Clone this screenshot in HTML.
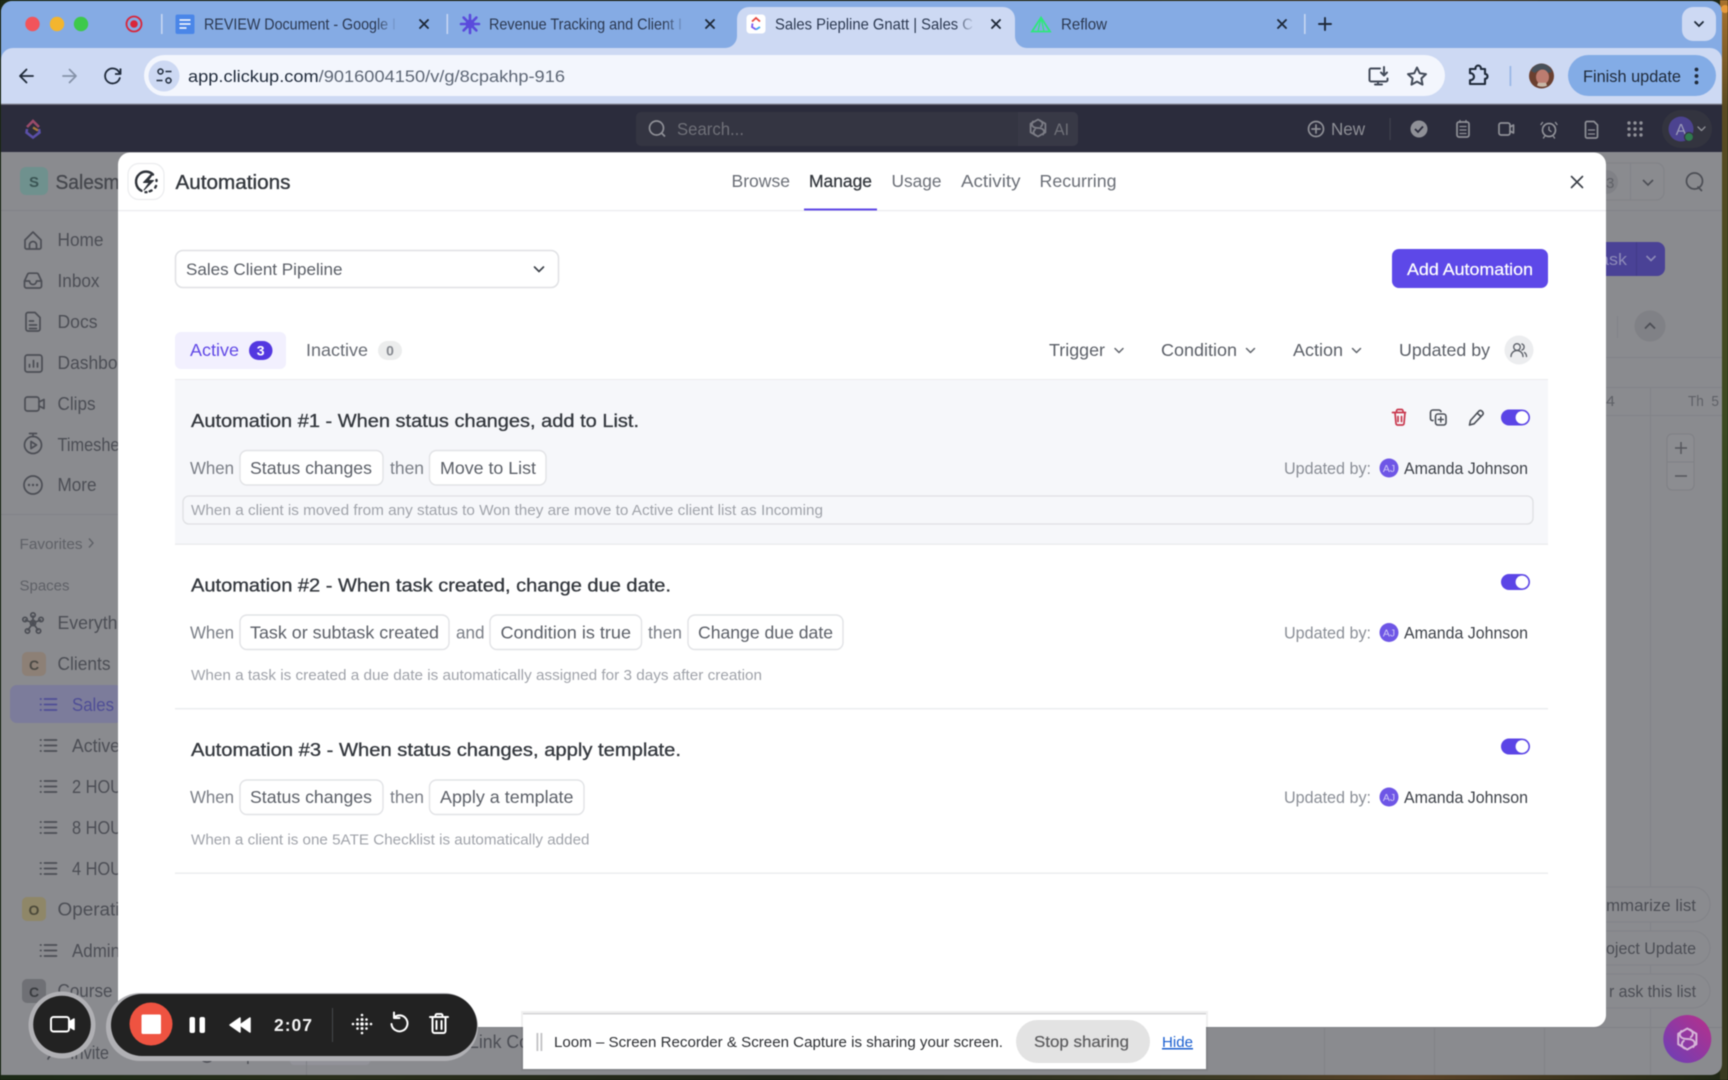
<!DOCTYPE html>
<html lang="en">
<head>
<meta charset="utf-8">
<title>Automations</title>
<style>
html,body{margin:0;padding:0;width:1728px;height:1080px;overflow:hidden;background:#14180f}
svg{position:absolute;left:0;top:0;display:block;filter:blur(.4px)}
text{font-family:"Liberation Sans",sans-serif;white-space:pre}
.tab{font-size:16px;fill:#2b3850}
.side{font-size:18px;fill:#4c4e55}
.t{font-size:18.5px;fill:#33373d;stroke:#33373d;stroke-width:.3}
.nav{font-size:17.5px;fill:#6b6f77}
.f{font-size:17.5px;fill:#5c6068}
.w{font-size:17.5px;fill:#7a7e86}
.c{font-size:17.5px;fill:#5c6068}
.d{font-size:14.5px;fill:#a0a3aa}
.u{font-size:16.5px;fill:#8a8e96}
.n{font-size:16.5px;fill:#3f434a}
.chip{fill:#fff;stroke:#e2e3e6;stroke-width:1.4}
.i{fill:none;stroke:#4c4e55;stroke-width:1.7;stroke-linecap:round;stroke-linejoin:round}
.k{fill:none;stroke:#3a3f47;stroke-width:1.9;stroke-linecap:round;stroke-linejoin:round}
.g{fill:none;stroke:#8f9097;stroke-width:1.7;stroke-linecap:round;stroke-linejoin:round}
.m{fill:none;stroke:#60646c;stroke-width:1.5;stroke-linecap:round;stroke-linejoin:round}
</style>
</head>
<body>
<svg width="1728" height="1080" viewBox="0 0 1728 1080" xmlns="http://www.w3.org/2000/svg">
<defs>
<linearGradient id="fa" x1="0" x2="1" y1="0" y2="0"><stop offset="0" stop-color="#85abe4" stop-opacity="0"/><stop offset="1" stop-color="#85abe4"/></linearGradient>
<linearGradient id="fb" x1="0" x2="1" y1="0" y2="0"><stop offset="0" stop-color="#cdd9f3" stop-opacity="0"/><stop offset="1" stop-color="#cdd9f3"/></linearGradient>
<linearGradient id="pk" x1="1" x2="0" y1="0" y2="1"><stop offset="0" stop-color="#b8308a"/><stop offset="1" stop-color="#6a40b8"/></linearGradient>
<linearGradient id="bg" x1="0" x2="1" y1="0" y2="0"><stop offset="0" stop-color="#1c2a17"/><stop offset=".2" stop-color="#2b2f1c"/><stop offset=".45" stop-color="#20261a"/><stop offset=".7" stop-color="#3c3a24"/><stop offset=".82" stop-color="#5b4226"/><stop offset="1" stop-color="#1f2816"/></linearGradient>
<linearGradient id="bgr" x1="0" x2="0" y1="0" y2="1"><stop offset="0" stop-color="#a8722e"/><stop offset=".1" stop-color="#5a4a22"/><stop offset=".4" stop-color="#3b4a22"/><stop offset=".7" stop-color="#262f1b"/><stop offset="1" stop-color="#3a3a20"/></linearGradient>
</defs>

<!-- desktop wallpaper -->
<rect x="0" y="0" width="1728" height="1080" fill="url(#bg)"/>
<rect x="1720" y="0" width="8" height="1080" fill="url(#bgr)"/>

<!-- browser window -->
<rect x="1" y="1" width="1721" height="1074" rx="11" fill="#8a8b8f"/>
<path d="M1 104V12A11 11 0 0 1 12 1H1711A11 11 0 0 1 1722 12V104Z" fill="#85abe4"/>
<path d="M1 104V60A12 12 0 0 1 13 48H1710A12 12 0 0 1 1722 60V104Z" fill="#cdd9f3"/>

<!-- tab strip -->
<circle cx="32.5" cy="24" r="7.2" fill="#f2545b"/>
<circle cx="57" cy="24" r="7.2" fill="#f3b52f"/>
<circle cx="81" cy="24" r="7.2" fill="#3dc94a"/>
<circle cx="134" cy="24" r="7.5" fill="none" stroke="#d9263a" stroke-width="1.8"/>
<circle cx="134" cy="24" r="3.8" fill="#d9263a"/>
<rect x="161" y="14" width="1.6" height="20" fill="#c6d6f2"/>
<rect x="175.500" y="14.500" width="19" height="19.500" rx="2" fill="#4a86e8"/>
<path d="M179.500 20h11M179.500 24h11M179.500 28h7" stroke="#fff" stroke-width="1.6" fill="none"/>
<text class="tab" x="204" y="29.500" textLength="192" lengthAdjust="spacingAndGlyphs">REVIEW Document - Google I</text>
<rect x="376" y="12" width="22" height="24" fill="url(#fa)"/>
<path d="M420 20l8 8M428 20l-8 8" stroke="#1f2a3a" stroke-width="1.900" stroke-linecap="round"/>
<rect x="446.500" y="14" width="1.600" height="20" fill="#c6d6f2"/>
<g stroke="#5a4bdc" stroke-width="2.600" stroke-linecap="round"><path d="M470 15v18M461 24h18M463.600 17.600l12.800 12.800M476.400 17.600l-12.800 12.800"/></g>
<circle cx="470" cy="24" r="4.500" fill="#5a4bdc"/>
<text class="tab" x="489" y="29.500" textLength="193" lengthAdjust="spacingAndGlyphs">Revenue Tracking and Client I</text>
<rect x="664" y="12" width="22" height="24" fill="url(#fa)"/>
<path d="M706 20l8 8M714 20l-8 8" stroke="#1f2a3a" stroke-width="1.900" stroke-linecap="round"/>

<!-- active tab -->
<path d="M725 48A12 12 0 0 0 737 36V19A12 12 0 0 1 749 7H1003A12 12 0 0 1 1015 19V36A12 12 0 0 0 1027 48Z" fill="#cdd9f3"/>
<rect x="746.500" y="14.500" width="19" height="19" rx="3.500" fill="#fff"/>
<path d="M752 21.500l4-3.500 4 3.500" fill="none" stroke="#e8473f" stroke-width="1.800"/>
<path d="M752.500 23.500l-.5 3.500 4 2.500" fill="none" stroke="#7b5bf0" stroke-width="1.800"/>
<path d="M756 29.500l4-2.500" fill="none" stroke="#3ba6f0" stroke-width="1.800"/>
<text class="tab" x="775" y="29.500" textLength="198" lengthAdjust="spacingAndGlyphs">Sales Piepline Gnatt | Sales C</text>
<rect x="955" y="12" width="20" height="24" fill="url(#fb)"/>
<path d="M992 20l8 8M1000 20l-8 8" stroke="#1f2a3a" stroke-width="1.900" stroke-linecap="round"/>

<path d="M1032 31.500l9-14 9 14z" fill="none" stroke="#2ee87b" stroke-width="1.800"/><path d="M1041 17.500l-3 14M1041 17.500l3 14" stroke="#2ee87b" stroke-width="1.300"/>
<text class="tab" x="1061" y="29.500" textLength="46" lengthAdjust="spacingAndGlyphs">Reflow</text>
<path d="M1278 20l8 8M1286 20l-8 8" stroke="#1f2a3a" stroke-width="1.900" stroke-linecap="round"/>
<rect x="1304" y="14" width="1.600" height="20" fill="#c6d6f2"/>
<path d="M1325 18v12M1319 24h12" stroke="#1f2a3a" stroke-width="1.900" stroke-linecap="round"/>
<rect x="1682" y="7" width="34" height="34" rx="11" fill="#cdd9f3"/>
<path d="M1695 22l4 4 4-4" fill="none" stroke="#1f2a3a" stroke-width="1.800" stroke-linecap="round"/>
<circle cx="1725" cy="9" r="4" fill="#e79a3c"/>

<!-- toolbar -->
<path d="M26.500 69.500l-6.500 6.500 6.500 6.500M20 76h13" fill="none" stroke="#1f2a3a" stroke-width="1.800" stroke-linecap="round" stroke-linejoin="round"/>
<path d="M69.500 69.500l6.500 6.500-6.500 6.500M63 76h13" fill="none" stroke="#8592a8" stroke-width="1.700" stroke-linecap="round" stroke-linejoin="round"/>
<path d="M119.500 73a7.500 7.500 0 1 0 .3 5" fill="none" stroke="#1f2a3a" stroke-width="1.800" stroke-linecap="round"/><path d="M120.500 68.500v5.500h-5.500" fill="none" stroke="#1f2a3a" stroke-width="1.800" stroke-linejoin="round"/>
<rect x="144" y="55" width="1301" height="41" rx="20.500" fill="#f3f6fd"/>
<circle cx="164" cy="76" r="15.500" fill="#cdd9f3"/>
<circle cx="160.500" cy="71.500" r="2.500" fill="none" stroke="#1f2a3a" stroke-width="1.500"/>
<path d="M165.500 71.500h6M156.500 80.500h6" stroke="#1f2a3a" stroke-width="1.500"/>
<circle cx="168.500" cy="80.500" r="2.500" fill="none" stroke="#1f2a3a" stroke-width="1.500"/>
<text x="188" y="82" font-size="17" textLength="377" lengthAdjust="spacingAndGlyphs" fill="#5d6675"><tspan fill="#1f2a3a">app.clickup.com</tspan>/9016004150/v/g/8cpakhp-916</text>
<path d="M1380 68.500h-9a1.500 1.500 0 0 0-1.500 1.500v10a1.500 1.500 0 0 0 1.500 1.500h15a1.500 1.500 0 0 0 1.500-1.500v-1.500M1375 84.500h7M1378 81.500v3M1384 67v8M1381 72.500l3 3 3-3" fill="none" stroke="#444c5a" stroke-width="2" stroke-linecap="round" stroke-linejoin="round"/>
<path d="M1417 67.500l2.700 5.700 6.300.9-4.600 4.300 1.100 6.200-5.500-3-5.500 3 1.100-6.200-4.600-4.300 6.300-.9z" fill="none" stroke="#444c5a" stroke-width="2" stroke-linejoin="round"/>
<path d="M1470 69h5.500v-.7a2.700 2.700 0 0 1 5.400 0v.7h4.100v5h.7a2.500 2.500 0 0 1 0 4.800h-.7V84h-15v-3.800h.5a3.500 3.500 0 0 0 0-7h-.5z" fill="none" stroke="#1f2a3a" stroke-width="2.100" stroke-linejoin="round"/>
<rect x="1509.500" y="66" width="1.800" height="20" fill="#9ab8e6"/>
<circle cx="1541.500" cy="76" r="12.500" fill="#6b4030"/>
<path d="M1531 71a11 11 0 0 1 21 1l-4 1c-4-4-10-4-13 0z" fill="#46505a"/>
<ellipse cx="1542.500" cy="77" rx="6.500" ry="7.500" fill="#bc7c70"/>
<path d="M1537 85.500a12 12 0 0 0 10 .3l-1-3h-8z" fill="#c9b8a8"/>
<rect x="1568" y="55" width="148" height="41" rx="20.500" fill="#83ace6"/>
<text x="1583" y="82" font-size="16.500" textLength="98" lengthAdjust="spacingAndGlyphs" fill="#1f2a3a">Finish update</text>
<circle cx="1696.500" cy="69.500" r="1.900" fill="#1f2a3a"/><circle cx="1696.500" cy="76" r="1.900" fill="#1f2a3a"/><circle cx="1696.500" cy="82.500" r="1.900" fill="#1f2a3a"/>

<!-- clickup topbar -->
<rect x="1" y="104" width="1721" height="48" fill="#2b2c3c"/>
<rect x="1" y="103.500" width="1721" height="1.200" fill="#8d8f9e"/>
<path d="M27 127l6-6 6 6" fill="none" stroke="#9a4b6a" stroke-width="2.600"/>
<path d="M27 129l-.5 3.500 6.500 5 6.500-5-.5-3.500" fill="none" stroke="#5a4fa8" stroke-width="2.600"/>
<path d="M33 127.500l5 3" fill="none" stroke="#a8783a" stroke-width="2.400"/>
<rect x="636" y="112" width="442" height="34" rx="5" fill="#343542"/>
<path d="M1018 112h55a5 5 0 0 1 5 5v24a5 5 0 0 1-5 5h-55z" fill="#383946"/>
<circle cx="656.500" cy="128" r="7" fill="none" stroke="#8f9097" stroke-width="1.700"/><path d="M661.500 133l3.500 3.500" stroke="#8f9097" stroke-width="1.700"/>
<text x="677" y="135" font-size="17.500" textLength="67" lengthAdjust="spacingAndGlyphs" fill="#6f7078">Search...</text>
<g transform="translate(1038 128)" fill="none" stroke="#7b7c85" stroke-width="1.800" stroke-linejoin="round" stroke-linecap="round"><path d="M0-8.500L7.400-4.300V4.300L0 8.500-7.400 4.300V-4.300Z"/><path d="M-5-6.500C-8-2-4 0 0 0S8 2 5 6.500"/><path d="M2-7.500C5-6 5-3 3-1.500M-2 7.500C-5 6-5 3-3 1.500"/></g>
<text x="1054" y="135" font-size="17" textLength="15" lengthAdjust="spacingAndGlyphs" fill="#6f7078">AI</text>
<circle cx="1316" cy="129" r="7.500" class="g"/><path d="M1316 125v8M1312 129h8" class="g"/>
<text x="1331" y="135" font-size="17.500" textLength="34" lengthAdjust="spacingAndGlyphs" fill="#8f9097">New</text>
<rect x="1389.500" y="118" width="1.200" height="22" fill="#3f404c"/>
<circle cx="1419" cy="129" r="8.500" fill="#8f9097"/><path d="M1415 129l3 3 5-5.500" fill="none" stroke="#2b2c3c" stroke-width="1.800"/>
<rect x="1457" y="122" width="12" height="15" rx="2" class="g"/><path d="M1460 126.500h6M1460 130h6M1460 133.500h6M1460 120.500v2M1466 120.500v2" class="g" style="stroke-width:1.300"/>
<rect x="1499" y="123" width="11" height="12" rx="2" class="g"/><path d="M1510 127l3.500-2v8l-3.500-2" class="g"/>
<circle cx="1549" cy="130" r="6.500" class="g"/><path d="M1549 127v3l2 1.500M1542.500 122.500l-1.500 2M1555.500 122.500l1.500 2M1544.500 136.500l-1 1.500M1553.500 136.500l1 1.500" class="g" style="stroke-width:1.400"/>
<path d="M1587 121.500h7l3.500 3.500v11.500a1.500 1.500 0 0 1-1.500 1.500h-9a1.500 1.500 0 0 1-1.500-1.500v-13.500a1.500 1.500 0 0 1 1.500-1.500z" class="g"/><path d="M1588.500 130h6M1588.500 134h6" class="g" style="stroke-width:1.300"/>
<g fill="#8f9097"><circle cx="1629" cy="123" r="1.700"/><circle cx="1635" cy="123" r="1.700"/><circle cx="1641" cy="123" r="1.700"/><circle cx="1629" cy="129" r="1.700"/><circle cx="1635" cy="129" r="1.700"/><circle cx="1641" cy="129" r="1.700"/><circle cx="1629" cy="135" r="1.700"/><circle cx="1635" cy="135" r="1.700"/><circle cx="1641" cy="135" r="1.700"/></g>
<rect x="1662" y="110" width="50" height="38" rx="19" fill="#33343f"/>
<circle cx="1681" cy="129" r="12.500" fill="#4c4390"/>
<text x="1681" y="135" font-size="16" text-anchor="middle" fill="#9a9ab8">A</text>
<circle cx="1689" cy="137" r="4.500" fill="#2f7a4e" stroke="#33343f" stroke-width="1.200"/>
<path d="M1698 127l3.500 3.500 3.500-3.500" class="g" style="stroke-width:1.300"/>

<!-- dim page: sidebar -->
<rect x="1" y="152" width="117" height="923" fill="#8a8b8f"/>
<rect x="20" y="167" width="28" height="28" rx="6" fill="#6f918e"/>
<text x="34" y="187" font-size="15" text-anchor="middle" fill="#3b5554" font-weight="700">S</text>
<text x="55.500" y="189" font-size="20" textLength="64" lengthAdjust="spacingAndGlyphs" fill="#45474d" stroke="#45474d" stroke-width=".3">Salesm</text>
<rect x="1" y="210" width="117" height="1" fill="#828388"/>

<path class="i" d="M25 240l8-8 8 8v7.500a1.500 1.500 0 0 1-1.500 1.500h-13a1.500 1.500 0 0 1-1.500-1.500zM29.500 249v-4a3.500 3.500 0 0 1 7 0v4"/>
<text class="side" x="57.500" y="246" textLength="46" lengthAdjust="spacingAndGlyphs">Home</text>
<path class="i" d="M24.500 281l3-6.500a2 2 0 0 1 2-1.300h7a2 2 0 0 1 2 1.300l3 6.500v5a2 2 0 0 1-2 2h-13a2 2 0 0 1-2-2zM24.500 281h5a3.500 3.500 0 0 0 7 0h5"/>
<text class="side" x="57.500" y="287" textLength="42" lengthAdjust="spacingAndGlyphs">Inbox</text>
<path class="i" d="M28 312.500h7l5 5v11.500a2 2 0 0 1-2 2H28a2 2 0 0 1-2-2v-14.500a2 2 0 0 1 2-2zM29.500 321h4M29.500 325h7M29.500 328.500h7"/>
<text class="side" x="57.500" y="328" textLength="40" lengthAdjust="spacingAndGlyphs">Docs</text>
<rect class="i" x="25" y="355" width="17" height="17" rx="2.500"/><path class="i" d="M29.500 367v-2.500M33.500 367v-6.500M37.500 367v-4"/>
<text class="side" x="57.500" y="369" textLength="60" lengthAdjust="spacingAndGlyphs">Dashbo</text>
<rect class="i" x="25" y="397" width="14" height="14" rx="2.500"/><path class="i" d="M39 402l5-2.500v9l-5-2.500"/>
<text class="side" x="57.500" y="410" textLength="38" lengthAdjust="spacingAndGlyphs">Clips</text>
<circle class="i" cx="33" cy="445" r="8.500"/><path class="i" d="M29.500 433.500h7M33 433.500v3M31 441.500l5.500 3.500-5.500 3.500z"/>
<text class="side" x="57.500" y="451" textLength="62" lengthAdjust="spacingAndGlyphs">Timeshe</text>
<circle class="i" cx="33" cy="485" r="9"/><circle cx="29" cy="485" r="1.200" fill="#4c4e55"/><circle cx="33" cy="485" r="1.200" fill="#4c4e55"/><circle cx="37" cy="485" r="1.200" fill="#4c4e55"/>
<text class="side" x="57.500" y="491" textLength="39" lengthAdjust="spacingAndGlyphs">More</text>
<rect x="1" y="514" width="117" height="1" fill="#828388"/>
<text x="19.500" y="549" font-size="15" textLength="63" lengthAdjust="spacingAndGlyphs" fill="#5f6167">Favorites</text>
<path d="M89 538.500l4 4.500-4 4.500" fill="none" stroke="#5f6167" stroke-width="1.400"/>
<text x="19.500" y="590.500" font-size="15" textLength="50" lengthAdjust="spacingAndGlyphs" fill="#5f6167">Spaces</text>

<path class="i" d="M33 623v-7M33 623l-7.500-3M33 623l7.500-3M33 623l-5 7M33 623l5 7"/>
<circle cx="33" cy="623" r="2.600" class="i"/><circle cx="33" cy="615" r="2.200" class="i"/><circle cx="25" cy="619.500" r="2.200" class="i"/><circle cx="41" cy="619.500" r="2.200" class="i"/><circle cx="27.500" cy="631" r="2.200" class="i"/><circle cx="38.500" cy="631" r="2.200" class="i"/>
<text class="side" x="57.500" y="629" textLength="60" lengthAdjust="spacingAndGlyphs">Everyth</text>

<rect x="22" y="652" width="24" height="24" rx="5" fill="#8d8076"/>
<text x="34" y="670" font-size="14" text-anchor="middle" font-weight="700" fill="#4c4a45">C</text>
<text class="side" x="57.500" y="670" textLength="53" lengthAdjust="spacingAndGlyphs">Clients</text>

<rect x="10" y="685" width="112" height="38" rx="7" fill="#7c7c9b"/>
<g class="i" style="stroke:#4f4e96"><path d="M44.500 699h12M44.500 704.500h12M44.500 710h12M40.500 699h.5M40.500 704.500h.5M40.500 710h.5"/></g>
<text class="side" x="72" y="711" textLength="42" lengthAdjust="spacingAndGlyphs" style="fill:#4f4e96">Sales</text>

<path class="i" d="M44.500 740h12M44.500 745.500h12M44.500 751h12M40.500 740h.5M40.500 745.500h.5M40.500 751h.5"/>
<text class="side" x="72" y="752" textLength="48" lengthAdjust="spacingAndGlyphs">Active</text>
<path class="i" d="M44.500 781h12M44.500 786.500h12M44.500 792h12M40.500 781h.5M40.500 786.500h.5M40.500 792h.5"/>
<text class="side" x="72" y="793" textLength="50" lengthAdjust="spacingAndGlyphs">2 HOU</text>
<path class="i" d="M44.500 822h12M44.500 827.500h12M44.500 833h12M40.500 822h.5M40.500 827.500h.5M40.500 833h.5"/>
<text class="side" x="72" y="834" textLength="50" lengthAdjust="spacingAndGlyphs">8 HOU</text>
<path class="i" d="M44.500 863h12M44.500 868.500h12M44.500 874h12M40.500 863h.5M40.500 868.500h.5M40.500 874h.5"/>
<text class="side" x="72" y="875" textLength="50" lengthAdjust="spacingAndGlyphs">4 HOU</text>

<rect x="22" y="897" width="24" height="24" rx="5" fill="#8f8768"/>
<text x="34" y="915" font-size="14" text-anchor="middle" font-weight="700" fill="#4c4a3a">O</text>
<text class="side" x="57.500" y="915.500" textLength="62" lengthAdjust="spacingAndGlyphs">Operati</text>
<path class="i" d="M44.500 945h12M44.500 950.500h12M44.500 956h12M40.500 945h.5M40.500 950.500h.5M40.500 956h.5"/>
<text class="side" x="72" y="957" textLength="48" lengthAdjust="spacingAndGlyphs">Admin</text>
<rect x="22" y="979" width="24" height="24" rx="5" fill="#6f7075"/>
<text x="34" y="997" font-size="14" text-anchor="middle" font-weight="700" fill="#3a3c40">C</text>
<text class="side" x="57.500" y="997" textLength="55" lengthAdjust="spacingAndGlyphs">Course</text>
<path class="i" d="M48 1059a6 6 0 0 1 9-3M52 1050a3.500 3.500 0 1 1 0 .1"/>
<text class="side" x="70" y="1059" textLength="39" lengthAdjust="spacingAndGlyphs">Invite</text>
<circle class="i" cx="207" cy="1055" r="7"/>
<text class="side" x="222" y="1060" textLength="33" lengthAdjust="spacingAndGlyphs">Help</text>
<rect x="290" y="1057" width="80" height="8" rx="4" fill="#929299"/>
<rect x="306" y="1027" width="1" height="48" fill="#808186"/>
<rect x="118" y="1027" width="1604" height="1" fill="#808186"/>
<text class="side" x="469" y="1048" textLength="60" lengthAdjust="spacingAndGlyphs">Link Co</text>
<g fill="#818287"><rect x="1324" y="1027" width="1" height="48"/><rect x="1434" y="1027" width="1" height="48"/><rect x="1544" y="1027" width="1" height="48"/><rect x="1650" y="1027" width="1" height="48"/></g>

<!-- dim page: right side -->
<rect x="1606" y="210" width="116" height="1" fill="#828388"/>
<path d="M1590 163h66a8 8 0 0 1 8 8v21a8 8 0 0 1-8 8h-66z" fill="none" stroke="#828388" stroke-width="1.200"/>
<rect x="1630" y="163" width="1" height="37" fill="#828388"/>
<circle cx="1606" cy="182" r="12" fill="#808186"/>
<text x="1606" y="188" font-size="15" fill="#5f6167">3</text>
<path d="M1643 180l5 5 5-5" fill="none" stroke="#4c4e55" stroke-width="1.600"/>
<circle cx="1694.500" cy="181" r="8" class="i"/><path class="i" d="M1698 187l3.500 3.500"/>
<path d="M1590 242h67a8 8 0 0 1 8 8v18a8 8 0 0 1-8 8h-67z" fill="#4a4296"/>
<rect x="1636" y="242" width="1" height="34" fill="#423b88"/>
<text x="1590" y="265" font-size="17" fill="#8d8ab8" textLength="37" lengthAdjust="spacingAndGlyphs">Task</text>
<path d="M1646.500 256l4.500 4.500 4.500-4.500" fill="none" stroke="#8d8ab8" stroke-width="1.600"/>
<rect x="1617" y="316" width="1" height="22" fill="#828388"/>
<circle cx="1650" cy="326" r="15.500" fill="#808186"/>
<path d="M1645 328.500l5-5 5 5" fill="none" stroke="#4c4e55" stroke-width="1.700"/>
<rect x="1606" y="357" width="116" height="1" fill="#828388"/>
<rect x="1606" y="387" width="116" height="1" fill="#828388"/>
<rect x="1606" y="415" width="116" height="1" fill="#828388"/>
<rect x="1650" y="387" width="1" height="640" fill="#828388"/>
<text x="1606" y="406" font-size="14.500" fill="#5f6167" textLength="9" lengthAdjust="spacingAndGlyphs">4</text>
<text x="1688" y="406" font-size="14.500" fill="#5f6167" textLength="31" lengthAdjust="spacingAndGlyphs">Th  5</text>
<rect x="1667" y="434" width="27" height="56" rx="5" fill="#8c8d91" stroke="#7f8085"/>
<path d="M1667 462h27" stroke="#7f8085"/>
<path d="M1675 448h12M1681 442v12M1675 476h12" stroke="#55575d" stroke-width="1.500" fill="none"/>
<rect x="1560" y="887" width="150" height="35" rx="17" fill="#8a8b8f" stroke="#828388"/>
<rect x="1560" y="931" width="150" height="34" rx="17" fill="#8a8b8f" stroke="#828388"/>
<rect x="1560" y="974" width="150" height="34" rx="17" fill="#8a8b8f" stroke="#828388"/>
<text class="side" x="1606" y="911" style="font-size:16.500px" textLength="90" lengthAdjust="spacingAndGlyphs">mmarize list</text>
<text class="side" x="1606" y="954" style="font-size:16.500px" textLength="90" lengthAdjust="spacingAndGlyphs">oject Update</text>
<text class="side" x="1609" y="997" style="font-size:16.500px" textLength="87" lengthAdjust="spacingAndGlyphs">r ask this list</text>
<circle cx="1687.300" cy="1039" r="24" fill="url(#pk)"/>
<g transform="translate(1687.300 1039)" fill="none" stroke="#d6b4d8" stroke-width="2" stroke-linejoin="round" stroke-linecap="round"><path d="M0-10.500L9.100-5.200V5.200L0 10.500-9.100 5.200V-5.200Z"/><path d="M-6-8C-10-2.500-5 0 0 0S10 2.500 6 8"/><path d="M2.500-9.500C6.500-7.500 6-3.500 3.500-1.800M-2.500 9.500C-6.500 7.500-6 3.500-3.500 1.800"/></g>

<!-- modal -->
<rect x="118" y="152.500" width="1488" height="874.500" rx="12" fill="#fff"/>
<rect x="118" y="210" width="1488" height="1.200" fill="#ebecee"/>
<rect x="128" y="163.500" width="36" height="36" rx="11" fill="#fff" stroke="#ebecee" stroke-width="1.200"/>
<path d="M153 174.500a10 10 0 0 0-13.500-.5 10.300 10.300 0 0 0 2 16.800" fill="none" stroke="#2f333a" stroke-width="2.400" stroke-linecap="round"/>
<path d="M156.500 180v1M156 186l-.8 1.600M151.500 190.500l-1.800.8M146.500 192.200h-1" fill="none" stroke="#2f333a" stroke-width="2.400" stroke-linecap="round"/>
<path d="M151 174.500l-7.500 8h5.800l-5.300 7.500 9.500-9.500h-5.300l4.300-6z" fill="#2f333a" stroke="#2f333a" stroke-width="1" stroke-linejoin="round"/>
<text x="175.500" y="189" font-size="20" textLength="115" lengthAdjust="spacingAndGlyphs" fill="#33373d" stroke="#33373d" stroke-width=".35">Automations</text>

<text class="nav" x="731.500" y="187" textLength="58.500" lengthAdjust="spacingAndGlyphs">Browse</text>
<text class="nav" x="809" y="187" textLength="63" lengthAdjust="spacingAndGlyphs" style="fill:#33373d;stroke:#33373d;stroke-width:.25">Manage</text>
<text class="nav" x="891.500" y="187" textLength="50" lengthAdjust="spacingAndGlyphs">Usage</text>
<text class="nav" x="961" y="187" textLength="59.500" lengthAdjust="spacingAndGlyphs">Activity</text>
<text class="nav" x="1039.500" y="187" textLength="77" lengthAdjust="spacingAndGlyphs">Recurring</text>
<rect x="804" y="208.500" width="73" height="2" fill="#5f48e6"/>
<path d="M1571.500 176.500l11 11M1582.500 176.500l-11 11" stroke="#3a3f47" stroke-width="1.600" stroke-linecap="round"/>

<rect x="175.500" y="250.500" width="383" height="37" rx="7.500" fill="#fff" stroke="#e0e1e4" stroke-width="1.500"/>
<text x="186" y="275" font-size="17" textLength="156.500" lengthAdjust="spacingAndGlyphs" fill="#5c6068">Sales Client Pipeline</text>
<path d="M534.500 267l4.500 4.500 4.500-4.500" fill="none" stroke="#3a3f47" stroke-width="1.600" stroke-linecap="round"/>
<rect x="1392" y="249" width="156" height="39" rx="7" fill="#5d48e8"/>
<text x="1407" y="275" font-size="17" textLength="126" lengthAdjust="spacingAndGlyphs" fill="#fff" stroke="#fff" stroke-width=".2">Add Automation</text>

<rect x="175" y="332" width="111" height="37" rx="6" fill="#f2f0fe"/>
<text x="190" y="356" font-size="17.500" textLength="49" lengthAdjust="spacingAndGlyphs" fill="#6048e6">Active</text>
<rect x="249" y="341" width="23.500" height="19" rx="9.500" fill="#5338e0"/>
<text x="260.700" y="355.500" font-size="14" text-anchor="middle" fill="#fff" font-weight="700">3</text>
<text x="306" y="356" font-size="17.500" textLength="62" lengthAdjust="spacingAndGlyphs" fill="#686c74">Inactive</text>
<rect x="378" y="341" width="24" height="19" rx="9.500" fill="#eceded"/>
<text x="390" y="355.500" font-size="14" text-anchor="middle" fill="#85888f" font-weight="700">0</text>

<text class="f" x="1049" y="356" textLength="56" lengthAdjust="spacingAndGlyphs">Trigger</text>
<path class="m" d="M1115 348.500l4 4 4-4"/>
<text class="f" x="1161" y="356" textLength="76" lengthAdjust="spacingAndGlyphs">Condition</text>
<path class="m" d="M1246.500 348.500l4 4 4-4"/>
<text class="f" x="1293" y="356" textLength="50" lengthAdjust="spacingAndGlyphs">Action</text>
<path class="m" d="M1352.500 348.500l4 4 4-4"/>
<text class="f" x="1399" y="356" textLength="91" lengthAdjust="spacingAndGlyphs">Updated by</text>
<circle cx="1519" cy="350" r="14.500" fill="#ecedef"/>
<circle cx="1517" cy="347" r="3.300" class="m" style="stroke-width:1.400"/><path class="m" style="stroke-width:1.400" d="M1511 356.500a6 6 0 0 1 12 0M1522 344a3.200 3.200 0 0 1 0 6M1524.500 352.500a5 5 0 0 1 2 4"/>

<rect x="175" y="379" width="1373" height="1.600" fill="#ebecee"/>
<rect x="175" y="380" width="1373" height="164" fill="#f6f7fa"/>
<rect x="175" y="543.500" width="1373" height="1.400" fill="#ebecee"/>
<rect x="175" y="708" width="1373" height="1.400" fill="#ebecee"/>
<rect x="175" y="872.500" width="1373" height="1.400" fill="#ebecee"/>

<!-- automation 1 -->
<text class="t" x="191" y="427" textLength="448" lengthAdjust="spacingAndGlyphs">Automation #1 - When status changes, add to List.</text>
<text class="w" x="190" y="474" textLength="44" lengthAdjust="spacingAndGlyphs">When</text>
<rect class="chip" x="240" y="450.500" width="143" height="34.500" rx="7"/>
<text class="c" x="250" y="474" textLength="122" lengthAdjust="spacingAndGlyphs">Status changes</text>
<text class="w" x="390" y="474" textLength="34" lengthAdjust="spacingAndGlyphs">then</text>
<rect class="chip" x="429.500" y="450.500" width="116.500" height="34.500" rx="7"/>
<text class="c" x="440" y="474" textLength="96" lengthAdjust="spacingAndGlyphs">Move to List</text>
<rect x="183" y="496" width="1350" height="28" rx="6" fill="#f6f7fa" stroke="#dfe0e3" stroke-width="1.300"/>
<text class="d" x="191" y="515" textLength="632" lengthAdjust="spacingAndGlyphs">When a client is moved from any status to Won they are move to Active client list as Incoming</text>
<path d="M1392.500 412.500h13M1395 412.500l1 11a1.500 1.500 0 0 0 1.500 1.500h5a1.500 1.500 0 0 0 1.500-1.500l1-11M1396.500 412.500v-1.500a1.500 1.500 0 0 1 1.500-1.500h3.500a1.500 1.500 0 0 1 1.500 1.500v1.500M1398 416.500v5M1401.500 416.500v5" fill="none" stroke="#c9384e" stroke-width="1.700" stroke-linejoin="round" stroke-linecap="round"/>
<path class="m" style="stroke:#4c5058;stroke-width:1.600" d="M1433 420.500a2 2 0 0 1-2.500-2v-6a2.500 2.500 0 0 1 2.500-2.500h6a2.500 2.500 0 0 1 2 1.500"/>
<rect class="m" style="stroke:#4c5058;stroke-width:1.600" x="1435.500" y="414" width="10.500" height="11" rx="2.500"/>
<path class="m" style="stroke:#4c5058;stroke-width:1.500" d="M1440.800 417v5M1438.300 419.500h5"/>
<path class="m" style="stroke:#4c5058;stroke-width:1.600" d="M1469.500 425l1-4.500 8.500-9.500a2 2 0 0 1 3 .2l.7.8a2 2 0 0 1-.1 2.800l-8.600 9zM1477 413l4 3.500"/>
<rect x="1501" y="409.500" width="29" height="16" rx="8" fill="#5b45e6"/>
<circle cx="1522" cy="417.500" r="6.400" fill="#fff"/>
<text class="u" x="1284" y="474" textLength="87" lengthAdjust="spacingAndGlyphs">Updated by:</text>
<circle cx="1389" cy="468" r="9.500" fill="#6e56e6"/>
<text x="1389" y="472" font-size="10.500" text-anchor="middle" fill="#cfc8f7">AJ</text>
<text class="n" x="1404" y="474" textLength="124" lengthAdjust="spacingAndGlyphs">Amanda Johnson</text>

<!-- automation 2 -->
<text class="t" x="191" y="591.500" textLength="480" lengthAdjust="spacingAndGlyphs">Automation #2 - When task created, change due date.</text>
<text class="w" x="190" y="638.500" textLength="44" lengthAdjust="spacingAndGlyphs">When</text>
<rect class="chip" x="240" y="615" width="209" height="34.500" rx="7"/>
<text class="c" x="250" y="638.500" textLength="189" lengthAdjust="spacingAndGlyphs">Task or subtask created</text>
<text class="w" x="456" y="638.500" textLength="28.500" lengthAdjust="spacingAndGlyphs">and</text>
<rect class="chip" x="490" y="615" width="151.500" height="34.500" rx="7"/>
<text class="c" x="500.500" y="638.500" textLength="130.500" lengthAdjust="spacingAndGlyphs">Condition is true</text>
<text class="w" x="648" y="638.500" textLength="34" lengthAdjust="spacingAndGlyphs">then</text>
<rect class="chip" x="688" y="615" width="155" height="34.500" rx="7"/>
<text class="c" x="698" y="638.500" textLength="135" lengthAdjust="spacingAndGlyphs">Change due date</text>
<text class="d" x="191" y="680" textLength="571" lengthAdjust="spacingAndGlyphs">When a task is created a due date is automatically assigned for 3 days after creation</text>
<rect x="1501" y="574" width="29" height="16" rx="8" fill="#5b45e6"/>
<circle cx="1522" cy="582" r="6.400" fill="#fff"/>
<text class="u" x="1284" y="638.500" textLength="87" lengthAdjust="spacingAndGlyphs">Updated by:</text>
<circle cx="1389" cy="632.500" r="9.500" fill="#6e56e6"/>
<text x="1389" y="636.500" font-size="10.500" text-anchor="middle" fill="#cfc8f7">AJ</text>
<text class="n" x="1404" y="638.500" textLength="124" lengthAdjust="spacingAndGlyphs">Amanda Johnson</text>

<!-- automation 3 -->
<text class="t" x="191" y="756" textLength="490" lengthAdjust="spacingAndGlyphs">Automation #3 - When status changes, apply template.</text>
<text class="w" x="190" y="803" textLength="44" lengthAdjust="spacingAndGlyphs">When</text>
<rect class="chip" x="240" y="780" width="143" height="34.500" rx="7"/>
<text class="c" x="250" y="803" textLength="122" lengthAdjust="spacingAndGlyphs">Status changes</text>
<text class="w" x="390" y="803" textLength="34" lengthAdjust="spacingAndGlyphs">then</text>
<rect class="chip" x="429.500" y="780" width="154.500" height="34.500" rx="7"/>
<text class="c" x="440" y="803" textLength="133.500" lengthAdjust="spacingAndGlyphs">Apply a template</text>
<text class="d" x="191" y="844.500" textLength="398.500" lengthAdjust="spacingAndGlyphs">When a client is one 5ATE Checklist is automatically added</text>
<rect x="1501" y="738.500" width="29" height="16" rx="8" fill="#5b45e6"/>
<circle cx="1522" cy="746.500" r="6.400" fill="#fff"/>
<text class="u" x="1284" y="803" textLength="87" lengthAdjust="spacingAndGlyphs">Updated by:</text>
<circle cx="1389" cy="797" r="9.500" fill="#6e56e6"/>
<text x="1389" y="801" font-size="10.500" text-anchor="middle" fill="#cfc8f7">AJ</text>
<text class="n" x="1404" y="803" textLength="124" lengthAdjust="spacingAndGlyphs">Amanda Johnson</text>

<!-- loom toolbar -->
<circle cx="62" cy="1025" r="33.500" fill="#b0b0b4"/>
<circle cx="62" cy="1024.500" r="28.800" fill="#222"/>
<rect x="106" y="993" width="372" height="68" rx="34" fill="#b0b0b4"/>
<rect x="111" y="994" width="366" height="62" rx="31" fill="#222"/>
<rect x="51" y="1017" width="18" height="14.500" rx="2.500" fill="none" stroke="#fff" stroke-width="2"/>
<path d="M69 1022l5-3v10.500l-5-3z" fill="#fff" stroke="#fff" stroke-width="1.500" stroke-linejoin="round"/>
<circle cx="151" cy="1024" r="21.500" fill="#ef5341"/>
<rect x="141.500" y="1014.500" width="19.500" height="19.500" rx="1.500" fill="#fff"/>
<rect x="189.500" y="1017" width="5.500" height="16" rx="2" fill="#fff"/>
<rect x="199.500" y="1017" width="5.500" height="16" rx="2" fill="#fff"/>
<path d="M240 1018v14l-10-7zM250 1018v14l-10-7z" fill="#fff" stroke="#fff" stroke-width="1.500" stroke-linejoin="round"/>
<text x="274" y="1031" font-size="17.500" font-weight="700" textLength="38" fill="#f4f4f4">2:07</text>
<rect x="332" y="1008" width="1" height="34" fill="#45474b"/>
<g fill="#fff"><circle cx="362" cy="1015" r="1.300"/><circle cx="357.500" cy="1019.500" r="1.300"/><circle cx="362" cy="1019.500" r="1.500"/><circle cx="366.500" cy="1019.500" r="1.300"/><circle cx="353" cy="1024" r="1.300"/><circle cx="357.500" cy="1024" r="1.500"/><circle cx="362" cy="1024" r="1.800"/><circle cx="366.500" cy="1024" r="1.500"/><circle cx="371" cy="1024" r="1.300"/><circle cx="357.500" cy="1028.500" r="1.300"/><circle cx="362" cy="1028.500" r="1.500"/><circle cx="366.500" cy="1028.500" r="1.300"/><circle cx="362" cy="1033" r="1.300"/></g>
<path d="M394 1017.500a8 8 0 1 1-2.500 6.500M394 1012.500v5.500h5.500" fill="none" stroke="#fff" stroke-width="2" stroke-linecap="round" stroke-linejoin="round"/>
<path d="M430 1017h18M432.500 1017v14a2 2 0 0 0 2 2h9a2 2 0 0 0 2-2v-14M435.500 1017v-1.500a1.500 1.500 0 0 1 1.500-1.500h4a1.500 1.500 0 0 1 1.500 1.500v1.500M436.500 1021v8M441.500 1021v8" fill="none" stroke="#fff" stroke-width="2" stroke-linecap="round" stroke-linejoin="round"/>

<!-- loom share banner -->
<rect x="521" y="1011" width="687" height="60" fill="#000" opacity=".06"/>
<rect x="523" y="1013" width="683" height="56" fill="#fff"/>
<rect x="523" y="1013" width="683" height="1.500" fill="#d4d4d6"/>
<rect x="536.500" y="1033" width="1.800" height="18" fill="#c2c2c4"/><rect x="540.500" y="1033" width="1.800" height="18" fill="#c2c2c4"/>
<text x="554" y="1047" font-size="15" textLength="449" lengthAdjust="spacingAndGlyphs" fill="#2e3034">Loom – Screen Recorder &amp; Screen Capture is sharing your screen.</text>
<rect x="1016" y="1020" width="134" height="43" rx="21.500" fill="#e3e3e3"/>
<text x="1034" y="1047" font-size="16" textLength="95" lengthAdjust="spacingAndGlyphs" fill="#5c5c5e" stroke="#5c5c5e" stroke-width=".2">Stop sharing</text>
<text x="1162" y="1047" font-size="15" textLength="31" lengthAdjust="spacingAndGlyphs" fill="#1a5fd0" text-decoration="underline">Hide</text>
</svg>
</body>
</html>
